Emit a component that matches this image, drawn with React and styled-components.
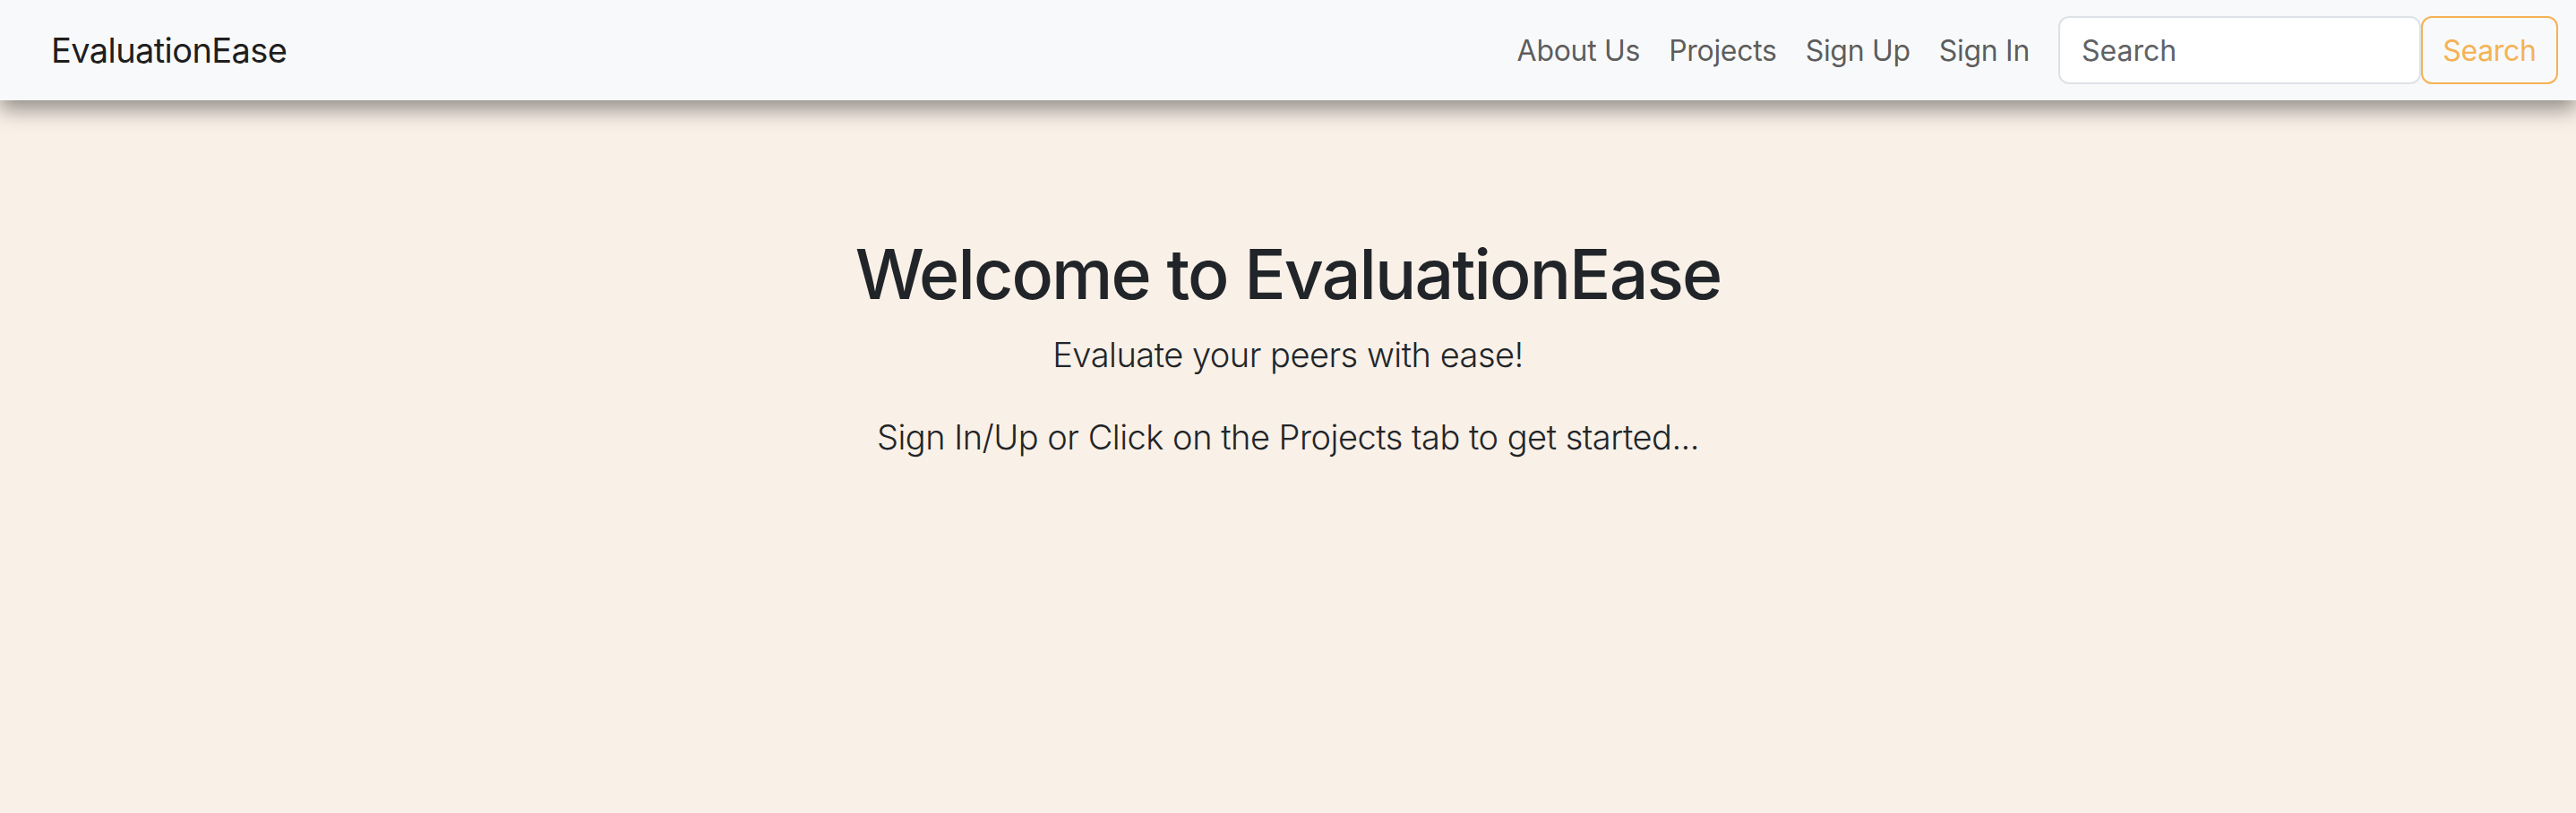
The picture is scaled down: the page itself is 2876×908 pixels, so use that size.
import React from "react";
import styled, { createGlobalStyle } from "styled-components";

const GlobalStyle = createGlobalStyle`
  html, body {
    margin: 0;
    padding: 0;
    background: #f9f0e7;
    font-family: Inter, "Noto Sans", "Liberation Sans", sans-serif;
    color: #212529;
  }
  * {
    box-sizing: border-box;
  }
`;

const Page = styled.div`
  min-height: 908px;
  background: #f9f0e7;
`;

const Navbar = styled.nav`
  position: relative;
  z-index: 1;
  height: 112px;
  display: flex;
  align-items: center;
  justify-content: space-between;
  padding: 0 20px 0 57px;
  background: #f8f9fa;
  box-shadow: 0 10px 22px rgba(0, 0, 0, 0.42);
`;

const Brand = styled.a`
  font-size: 38px;
  color: rgba(0, 0, 0, 0.9);
  text-decoration: none;
  letter-spacing: -0.6px;
`;

const NavRight = styled.div`
  display: flex;
  align-items: center;
`;

const NavLinks = styled.ul`
  display: flex;
  list-style: none;
  margin: 0 16px 0 0;
  padding: 0;
`;

const NavLink = styled.a`
  display: block;
  padding: 16px;
  font-size: 32px;
  color: rgba(0, 0, 0, 0.65);
  text-decoration: none;
  letter-spacing: -0.3px;
`;

const SearchForm = styled.form`
  display: flex;
  align-items: center;
`;

const SearchInput = styled.input`
  width: 405px;
  height: 76px;
  padding: 0 24px;
  font-family: inherit;
  font-size: 32px;
  color: #212529;
  background: #fff;
  border: 2px solid #dee2e6;
  border-radius: 12px;
  outline: none;
  &::placeholder {
    color: #5f6265;
  }
`;

const SearchButton = styled.button`
  width: 153px;
  height: 76px;
  padding: 0;
  font-family: inherit;
  font-size: 32px;
  color: #f5b256;
  background: transparent;
  border: 2px solid #f5b256;
  border-radius: 12px;
  letter-spacing: -0.3px;
`;

const Hero = styled.main`
  display: flex;
  flex-direction: column;
  align-items: center;
  padding-top: 146px;
  text-align: center;
`;

const Title = styled.h1`
  margin: 0 0 12px;
  font-size: 77px;
  font-weight: 500;
  line-height: 96px;
  letter-spacing: -1.9px;
  color: #212529;
`;

const Lead = styled.p`
  margin: 0 0 32px;
  font-size: 38px;
  font-weight: 300;
  line-height: 60px;
  letter-spacing: -0.5px;
  color: #212529;
`;

const links = ["About Us", "Projects", "Sign Up", "Sign In"];

export default function App() {
  return (
    <Page>
      <GlobalStyle />
      <Navbar>
        <Brand href="#">EvaluationEase</Brand>
        <NavRight>
          <NavLinks>
            {links.map((l) => (
              <li key={l}>
                <NavLink href="#">{l}</NavLink>
              </li>
            ))}
          </NavLinks>
          <SearchForm onSubmit={(e) => e.preventDefault()}>
            <SearchInput type="search" placeholder="Search" />
            <SearchButton type="submit">Search</SearchButton>
          </SearchForm>
        </NavRight>
      </Navbar>
      <Hero>
        <Title>Welcome to EvaluationEase</Title>
        <Lead>Evaluate your peers with ease!</Lead>
        <Lead>Sign In/Up or Click on the Projects tab to get started...</Lead>
      </Hero>
    </Page>
  );
}
